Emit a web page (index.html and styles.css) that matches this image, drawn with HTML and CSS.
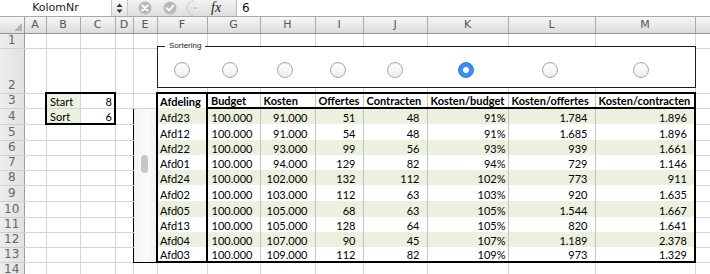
FILE: index.html
```html
<!DOCTYPE html>
<html lang="nl">
<head>
    <meta charset="UTF-8">
    <meta name="viewport" content="width=device-width, initial-scale=1.0">
    <title>Sortering</title>
    <link rel="stylesheet" href="styles.css">
</head>
<body>
    <div class="app">
        <!-- formulebalk -->
        <div class="formula-bar">
            <div class="name-box">KolomNr</div>
            <div class="stepper">
                <svg width="7" height="11" viewBox="0 0 7 11"><path d="M3.5 0.5 L6.5 4 L0.5 4 Z M0.5 6.5 L6.5 6.5 L3.5 10 Z" fill="#333"/></svg>
            </div>
            <div class="tools">
                <svg width="80" height="16" viewBox="0 0 80 16">
                    <circle cx="17" cy="8" r="6.5" fill="#b9b9b9"/>
                    <path d="M14.3 5.3 L19.7 10.7 M19.7 5.3 L14.3 10.7" stroke="#fff" stroke-width="1.8" stroke-linecap="round"/>
                    <circle cx="42" cy="8" r="6.5" fill="#b9b9b9"/>
                    <path d="M38.8 8.2 L41.2 10.5 L45.3 5.6" stroke="#fff" stroke-width="1.8" fill="none" stroke-linecap="round" stroke-linejoin="round"/>
                    <path d="M66 1 A7 7 0 0 0 66 15" stroke="#c9c9c9" stroke-width="1" fill="none"/>
                    <rect x="65" y="7" width="4" height="2" rx="1" fill="#c9c9c9"/>
                </svg>
                <span class="fx">fx</span>
            </div>
            <div class="formula">6</div>
        </div>

        <div class="sheet">
            <table class="grid">
                <colgroup>
                    <col style="width:24px"><col style="width:22px"><col style="width:34px"><col style="width:35px">
                    <col style="width:18px"><col style="width:24px"><col style="width:50px"><col style="width:53px">
                    <col style="width:55px"><col style="width:48px"><col style="width:64px"><col style="width:81px">
                    <col style="width:87px"><col style="width:100px"><col style="width:30px">
                </colgroup>
                <tr class="col-heads">
                    <th class="corner"><svg width="8" height="8" viewBox="0 0 8 8"><path d="M8 0 L8 8 L0 8 Z" fill="#b4b4b4"/></svg></th>
                    <th>A</th><th>B</th><th>C</th><th>D</th><th>E</th><th>F</th><th>G</th>
                    <th>H</th><th>I</th><th>J</th><th>K</th><th>L</th><th>M</th><th></th>
                </tr>
                <tr class="h15">
                    <th>1</th><td></td><td></td><td></td><td></td><td></td><td></td><td></td>
                    <td></td><td></td><td></td><td></td><td></td><td></td><td></td>
                </tr>
                <tr class="h45">
                    <th class="low">2</th><td></td><td></td><td></td><td></td><td></td><td></td><td></td>
                    <td></td><td></td><td></td><td></td><td></td><td></td><td></td>
                </tr>
                <tr class="h15">
                    <th>3</th><td></td>
                    <td class="inp lbl top">Start</td><td class="inp val top">8</td>
                    <td></td><td></td>
                    <td class="hd t">Afdeling</td><td class="hd">Budget</td><td class="hd">Kosten</td>
                    <td class="hd">Offertes</td><td class="hd">Contracten</td><td class="hd">Kosten/budget</td>
                    <td class="hd">Kosten/offertes</td><td class="hd m">Kosten/contracten</td>
                    <td></td>
                </tr>
                <tr class="h16 band">
                    <th>4</th><td></td>
                    <td class="inp lbl bottom">Sort</td><td class="inp val bottom">6</td>
                    <td class="edge"></td>
                    <td class="scroll" rowspan="10"><div class="thumb"></div></td>
                    <td class="t">Afd23</td><td class="n">100.000</td><td class="n">91.000</td><td class="n">51</td>
                    <td class="n">48</td><td class="n k">91%</td><td class="n">1.784</td><td class="n m">1.896</td>
                    <td></td>
                </tr>
                <tr class="h16">
                    <th>5</th><td></td><td></td><td></td><td class="edge"></td>
                    <td class="t">Afd12</td><td class="n">100.000</td><td class="n">91.000</td><td class="n">54</td>
                    <td class="n">48</td><td class="n k">91%</td><td class="n">1.685</td><td class="n m">1.896</td>
                    <td></td>
                </tr>
                <tr class="h15 band">
                    <th>6</th><td></td><td></td><td></td><td class="edge"></td>
                    <td class="t">Afd22</td><td class="n">100.000</td><td class="n">93.000</td><td class="n">99</td>
                    <td class="n">56</td><td class="n k">93%</td><td class="n">939</td><td class="n m">1.661</td>
                    <td></td>
                </tr>
                <tr class="h15">
                    <th>7</th><td></td><td></td><td></td><td class="edge"></td>
                    <td class="t">Afd01</td><td class="n">100.000</td><td class="n">94.000</td><td class="n">129</td>
                    <td class="n">82</td><td class="n k">94%</td><td class="n">729</td><td class="n m">1.146</td>
                    <td></td>
                </tr>
                <tr class="h15 band">
                    <th>8</th><td></td><td></td><td></td><td class="edge"></td>
                    <td class="t">Afd24</td><td class="n">100.000</td><td class="n">102.000</td><td class="n">132</td>
                    <td class="n">112</td><td class="n k">102%</td><td class="n">773</td><td class="n m">911</td>
                    <td></td>
                </tr>
                <tr class="h16">
                    <th>9</th><td></td><td></td><td></td><td class="edge"></td>
                    <td class="t">Afd02</td><td class="n">100.000</td><td class="n">103.000</td><td class="n">112</td>
                    <td class="n">63</td><td class="n k">103%</td><td class="n">920</td><td class="n m">1.635</td>
                    <td></td>
                </tr>
                <tr class="h16 band">
                    <th>10</th><td></td><td></td><td></td><td class="edge"></td>
                    <td class="t">Afd05</td><td class="n">100.000</td><td class="n">105.000</td><td class="n">68</td>
                    <td class="n">63</td><td class="n k">105%</td><td class="n">1.544</td><td class="n m">1.667</td>
                    <td></td>
                </tr>
                <tr class="h15">
                    <th>11</th><td></td><td></td><td></td><td class="edge"></td>
                    <td class="t">Afd13</td><td class="n">100.000</td><td class="n">105.000</td><td class="n">128</td>
                    <td class="n">64</td><td class="n k">105%</td><td class="n">820</td><td class="n m">1.641</td>
                    <td></td>
                </tr>
                <tr class="h15 band">
                    <th>12</th><td></td><td></td><td></td><td class="edge"></td>
                    <td class="t">Afd04</td><td class="n">100.000</td><td class="n">107.000</td><td class="n">90</td>
                    <td class="n">45</td><td class="n k">107%</td><td class="n">1.189</td><td class="n m">2.378</td>
                    <td></td>
                </tr>
                <tr class="h15 last">
                    <th>13</th><td></td><td></td><td></td><td class="edge"></td>
                    <td class="t">Afd03</td><td class="n">100.000</td><td class="n">109.000</td><td class="n">112</td>
                    <td class="n">82</td><td class="n k">109%</td><td class="n">973</td><td class="n m">1.329</td>
                    <td></td>
                </tr>
                <tr class="h13">
                    <th>14</th><td></td><td></td><td></td><td></td><td></td><td></td><td></td>
                    <td></td><td></td><td></td><td></td><td></td><td></td><td></td>
                </tr>
            </table>

            <!-- groepsvak met keuzerondjes, ligt over rij 1 en 2 -->
            <div class="group-box">
                <span class="group-label">Sortering</span>
                <div class="radios">
                    <span class="radio"></span>
                    <span class="radio"></span>
                    <span class="radio"></span>
                    <span class="radio"></span>
                    <span class="radio"></span>
                    <span class="radio on"></span>
                    <span class="radio"></span>
                    <span class="radio"></span>
                </div>
            </div>
        </div>
    </div>
</body>
</html>
```

FILE: styles.css
```css
/* Werkblad met sorteerkeuze */
body {
    margin: 0;
    background: #fff;
    font-family: "Lato", sans-serif;
    color: #000;
}

.app {
    width: 710px;
    height: 274px;
    overflow: hidden;
}

/* formulebalk */
.formula-bar {
    display: flex;
    height: 16px;
    border-bottom: 1px solid #a9a9a9;
    font-family: "DejaVu Sans", sans-serif;
    font-size: 11px;
}

.name-box {
    width: 112px;
    line-height: 16px;
    text-align: center;
    color: #222;
    border-right: 1px solid #c6c6c6;
    box-sizing: border-box;
}

.stepper {
    width: 16px;
    display: flex;
    align-items: center;
    justify-content: center;
    background: linear-gradient(#f8f8f8, #e4e4e4);
    border-right: 1px solid #c6c6c6;
    box-sizing: border-box;
}

.tools {
    width: 109px;
    display: flex;
    align-items: center;
    background: linear-gradient(#f2f2f2, #dedede);
    border-right: 1px solid #b6b6b6;
    box-sizing: border-box;
}

.fx {
    margin-left: 3px;
    font-family: "Liberation Serif", serif;
    font-style: italic;
    font-size: 14px;
    line-height: 16px;
    color: #222;
}

.formula {
    flex: 1;
    padding-left: 5px;
    line-height: 16px;
    font-size: 12px;
    color: #111;
}

/* raster */
.sheet {
    position: relative;
}

.grid {
    border-collapse: collapse;
    table-layout: fixed;
    width: 725px;
    font-size: 11px;
}

.grid td {
    padding: 0 3px;
    line-height: 13px;
    vertical-align: bottom;
    white-space: nowrap;
    overflow: hidden;
    border-right: 1px solid #d5d5d5;
    border-bottom: 1px solid #d5d5d5;
}

.grid th {
    padding: 0;
    font-family: "DejaVu Sans", sans-serif;
    font-weight: normal;
    font-size: 11px;
    color: #555;
}

.col-heads {
    height: 16px;
}

.col-heads th {
    background: linear-gradient(#f6f6f6, #dcdcdc);
    border-right: 1px solid #aaa;
    border-bottom: 1px solid #959595;
    line-height: 14px;
}

.col-heads .corner {
    text-align: right;
    vertical-align: bottom;
    line-height: 0;
}

.corner svg {
    margin: 0 2px 2px 0;
}

tr > th:first-child {
    background: linear-gradient(90deg, #ececec, #e2e2e2);
    border-right: 1px solid #9c9c9c;
    border-bottom: 1px solid #cfcfcf;
    line-height: 13px;
    vertical-align: middle;
    font-size: 12px;
    color: #666;
}

tr > th.low {
    vertical-align: bottom;
    padding-bottom: 1px;
}

.col-heads > th:first-child {
    background: linear-gradient(#f6f6f6, #dcdcdc);
    border-bottom: 1px solid #959595;
    vertical-align: bottom;
}

.h13 { height: 13px; }
.h15 { height: 15px; }
.h16 { height: 16px; }
.h45 { height: 45px; }

/* invoervak Start / Sort */
.grid .inp.top { border-top: 2px solid #000; }
.grid .inp.bottom { border-bottom: 2px solid #000; }
.grid .lbl {
    border-left: 2px solid #000;
    background: #ebf1de;
}
.grid .val {
    border-right: 2px solid #000;
    text-align: right;
    padding-right: 2px;
}

/* schuifbalk in kolom E */
.grid .edge {
    border-right: 1px solid #000;
}

.grid .scroll {
    padding: 0;
    vertical-align: top;
    background: linear-gradient(90deg, #f1f1f1, #fafafa 60%, #f3f3f3);
    border-bottom: 1px solid #000;
}

.thumb {
    width: 7px;
    height: 18px;
    margin: 46px 0 0 7px;
    border-radius: 4px;
    background: #c7c7c7;
}

/* gegevenstabel */
.grid .hd {
    font-weight: bold;
    border-top: 2px solid #000;
    border-bottom: 2px solid #000;
    border-right: 1px solid #c4c4c4;
}

.grid .t {
    border-left: 2px solid #000;
    border-right: 2px solid #000;
    border-bottom: none;
    padding-left: 2px;
}

.grid .n {
    text-align: right;
    padding-right: 7px;
    border-right: 1px solid #c4c4c4;
    border-bottom: none;
}

.grid .n.k {
    padding-right: 2px;
}

.grid .m {
    border-right: 2px solid #000;
}

.grid .hd.t {
    border-right: 2px solid #000;
}

.grid .hd.m {
    border-right: 2px solid #000;
}

.band .t,
.band .n {
    background: #ebf1de;
}

.grid .last .t,
.grid .last .n {
    border-bottom: 2px solid #000;
}

/* groepsvak Sortering */
.group-box {
    position: absolute;
    left: 157px;
    top: 29px;
    width: 539px;
    height: 42px;
    border: 1px solid #1e1e1e;
    box-sizing: border-box;
    background: #fff;
}

.group-label {
    position: absolute;
    left: 7px;
    top: -6px;
    padding: 0 4px;
    background: #fff;
    font-family: "Liberation Sans", sans-serif;
    font-size: 8px;
    line-height: 10px;
    color: #222;
}

.radios {
    display: grid;
    grid-template-columns: 48px 48px 62px 44px 70px 72px 96px 86px;
    justify-items: center;
    padding-top: 15px;
}

.radio {
    width: 16px;
    height: 16px;
    box-sizing: border-box;
    border-radius: 50%;
    border: 1px solid #a8a8a8;
    background: linear-gradient(#fff, #ededed);
    box-shadow: inset 0 1px 1px rgba(0,0,0,0.06);
}

.radio.on {
    border-color: #2f7de2;
    background: radial-gradient(circle, #fff 0 2.6px, #3c8ef2 3.4px);
}
```
